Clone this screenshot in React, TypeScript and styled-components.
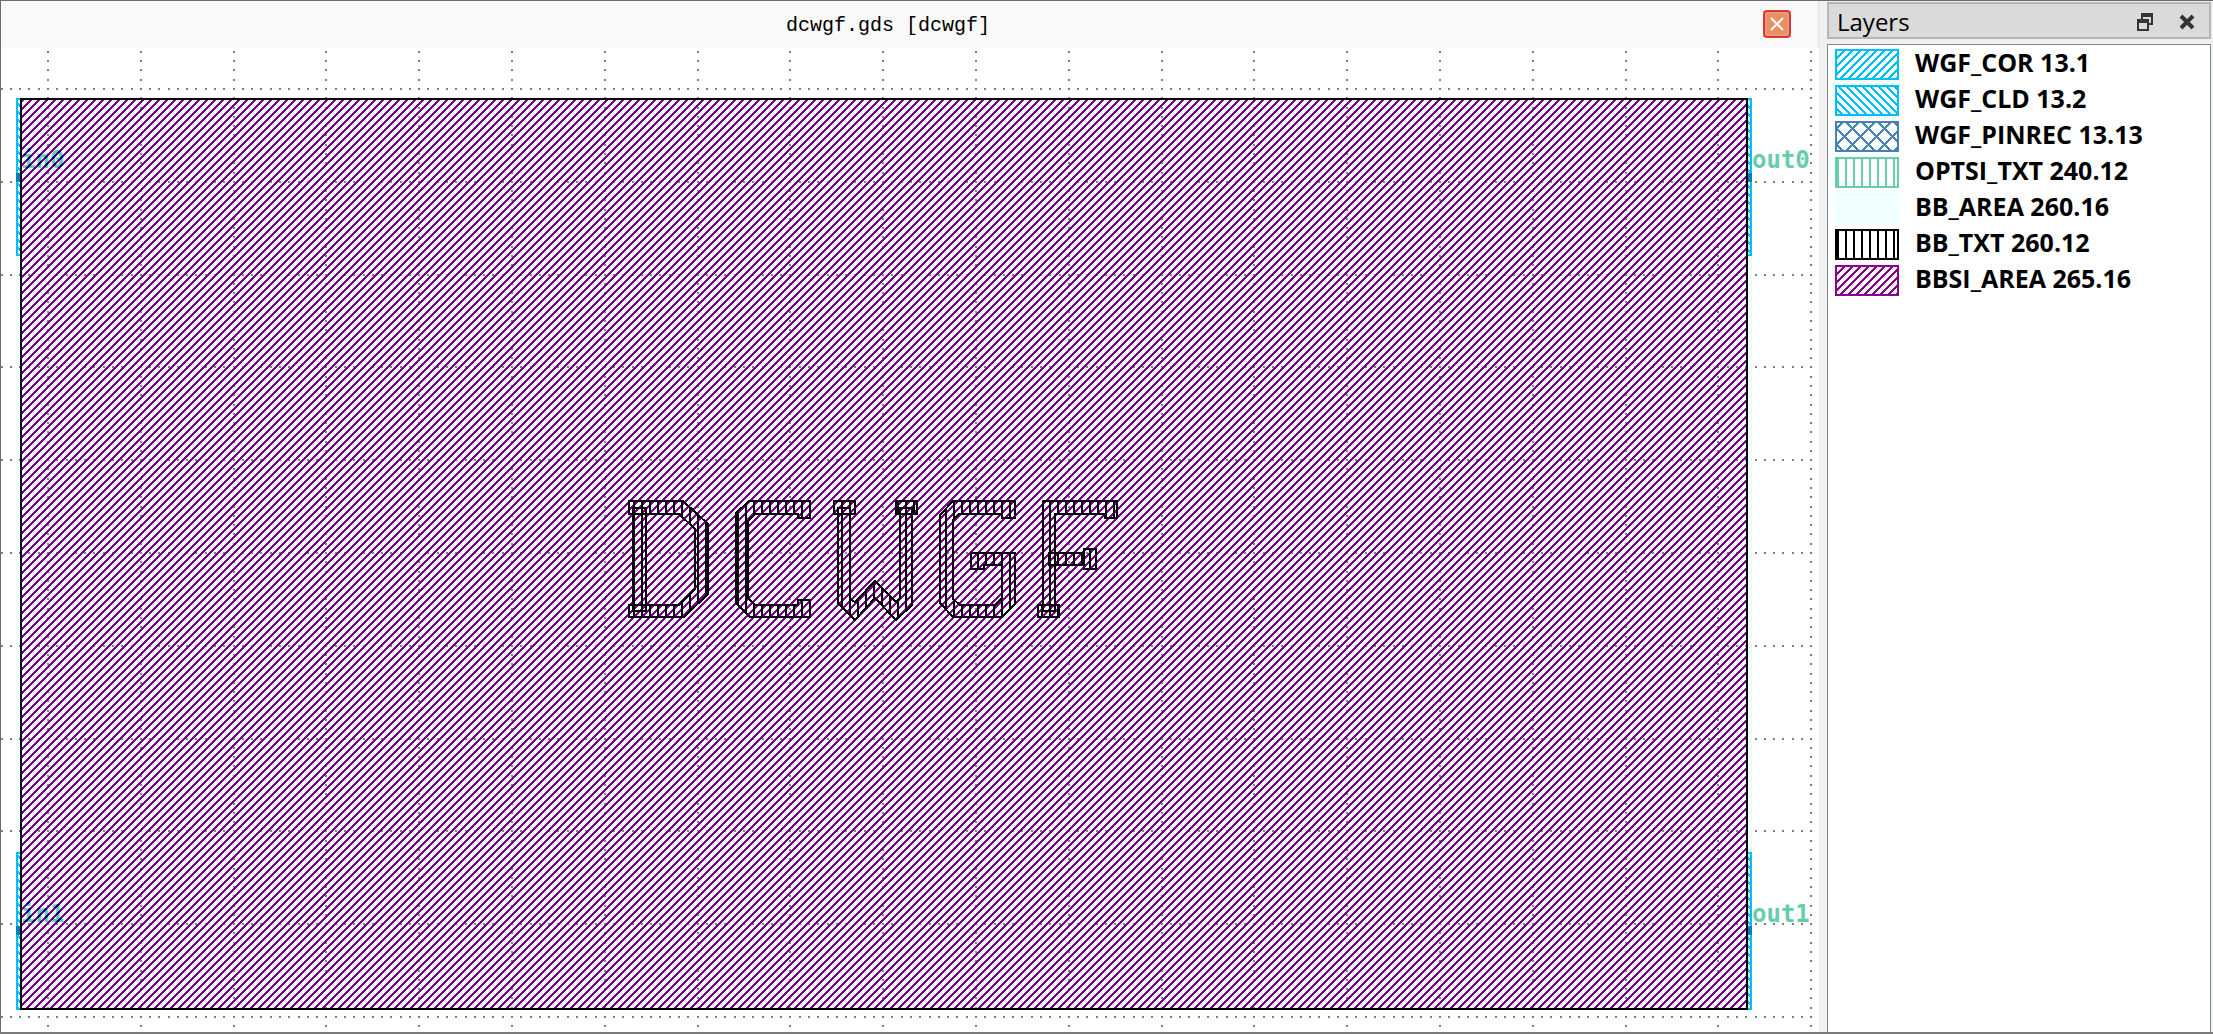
import React from "react";
import styled, { createGlobalStyle } from "styled-components";

const GlobalStyle = createGlobalStyle`
  *, *::before, *::after { box-sizing: border-box; }
  body { margin: 0; background: #f0f0f0; }
`;

const Window = styled.div`
  display: flex;
  height: 100vh;
  border-bottom: 2px solid #7b7b7b;
  background: #f0f0f0;
  color: #000;
  font-family: "Open Sans", "Noto Sans", sans-serif;
`;

const Viewer = styled.main`
  flex: 1;
  min-width: 0;
  display: flex;
  flex-direction: column;
  border-top: 1px solid #6d6a6d;
  border-left: 1px solid #6d6a6d;
  background: #fff;
`;

const TabBar = styled.header`
  display: flex;
  align-items: center;
  flex: none;
  height: 47px;
  padding: 0 27px 1px 12px;
  border-right: 1px solid #e4e4e4;
  background: #f9f9f9;
`;

const TabTitle = styled.h1`
  flex: 1;
  margin: 0;
  padding-top: 4px;
  text-align: center;
  font: 400 20px/24px "Liberation Mono", monospace;
`;

const CloseTab = styled.button`
  display: grid;
  place-items: center;
  width: 28px;
  height: 28px;
  padding: 0;
  border: 2px solid #d93a2b;
  border-radius: 4px;
  background: #e9905f;
  box-shadow: inset 0 0 0 2px #ec9488;
`;

const Canvas = styled.svg`
  display: block;
  flex: 1;
  min-height: 0;
  width: 100%;
`;

const PinLabel = styled.text`
  font: 700 24px "DejaVu Sans Mono", monospace;
`;

const Dock = styled.aside`
  flex: none;
  width: 394px;
  display: flex;
  flex-direction: column;
  gap: 5px;
  padding: 1px 2px 0 8px;
  border-top: 1px solid #6d6a6d;
`;

const DockTitle = styled.div`
  display: flex;
  align-items: center;
  gap: 26px;
  height: 37px;
  padding: 2px 14px 0 8px;
  border: 2px solid #b6b6b6;
  background: #dadada;
`;

const DockName = styled.h2`
  flex: 1;
  margin: 0;
  font-size: 24px;
  line-height: 32px;
  font-weight: 400;
`;

const DockButton = styled.button`
  display: flex;
  padding: 0;
  border: 0;
  background: none;
`;

const LayerList = styled.ul`
  flex: 1;
  margin: 0;
  padding: 2px 7px;
  border: 1px solid #828790;
  border-bottom: 0;
  background: #fff;
  list-style: none;
`;

const LayerRow = styled.li`
  display: flex;
  align-items: flex-start;
  gap: 16px;
  height: 36px;
  font-size: 25px;
  line-height: 30px;
  font-weight: 700;
  white-space: nowrap;
`;

const Swatch = styled.svg`
  flex: none;
  width: 64px;
  height: 31px;
  margin-top: 2px;
`;

type Fill = "rise" | "fall" | "cross" | "bars" | "solid";

interface Layer {
  id: string;
  name: string;
  color: string;
  fill: Fill;
}

const layers: Layer[] = [
  { id: "cor", name: "WGF_COR 13.1", color: "#00bfff", fill: "rise" },
  { id: "cld", name: "WGF_CLD 13.2", color: "#00bfff", fill: "fall" },
  { id: "pinrec", name: "WGF_PINREC 13.13", color: "#4682b4", fill: "cross" },
  { id: "optsi", name: "OPTSI_TXT 240.12", color: "#66cdaa", fill: "bars" },
  { id: "bb", name: "BB_AREA 260.16", color: "#f0ffff", fill: "solid" },
  { id: "bbtxt", name: "BB_TXT 260.12", color: "#000000", fill: "bars" },
  { id: "bbsi", name: "BBSI_AREA 265.16", color: "#8b008b", fill: "rise" },
];

const range = (n: number) => Array.from({ length: n }, (_, i) => i);

/* Stippled diagonal: a run of pixels on each row, wrapped at the tile edge. */
const diagonal = (size: number, run: number, phase: number, rising: boolean) =>
  range(size)
    .flatMap((y) =>
      range(run).map((k) => {
        const x = (((rising ? phase - y : phase + y) + k) % size + size) % size;
        return `M${x} ${y}h1v1h-1z`;
      })
    )
    .join("");

const stipple: Record<Fill, { size: number; d: string }> = {
  rise: { size: 8, d: diagonal(8, 3, 1, true) },
  fall: { size: 8, d: diagonal(8, 3, 1, false) },
  cross: { size: 16, d: diagonal(16, 3, 7, true) + diagonal(16, 3, 9, false) },
  bars: { size: 8, d: "M2 0h2v8h-2z" },
  solid: { size: 8, d: "M0 0h8v8h-8z" },
};

function Stipple(props: {
  id: string;
  fill: Fill;
  color: string;
  back?: string;
  x?: number;
  y?: number;
}) {
  const { size, d } = stipple[props.fill];
  return (
    <pattern
      id={props.id}
      x={props.x ?? 0}
      y={props.y ?? 0}
      width={size}
      height={size}
      patternUnits="userSpaceOnUse"
    >
      {props.back && <rect width={size} height={size} fill={props.back} />}
      <path d={d} fill={props.color} shapeRendering="crispEdges" />
    </pattern>
  );
}

/* The grid has ten dots to a cell. */
const STEP = 9.28;
const gridPath = (() => {
  const dots: string[] = [];
  const dot = (x: number, y: number) =>
    dots.push(`M${Math.round(x) - 1} ${Math.round(y) - 1}h2v2h-2z`);
  for (let line = 0; line < 20; line++)
    for (let k = -4; k < 102; k++) dot(48 + line * STEP * 10, 89 + k * STEP);
  for (let line = 0; line < 11; line++)
    for (let k = -5; k < 191; k++) dot(48 + k * STEP, 89 + line * STEP * 10);
  return dots.join("");
})();

const box = (x1: number, y1: number, x2: number, y2: number) =>
  `M${x1} ${y1}H${x2}V${y2}H${x1}z`;

const glyphShapes = [
  "M629 501H683L708 524V594L684 617H629V605H679L695 589V529L679 514H629z",
  box(633, 508, 646, 611),
  "M749 501H810V518H798V514H755L748 521V598L755 605H798V600H810V617H750L736 603V513z",
  box(834, 501, 855, 514),
  box(896, 501, 917, 514),
  "M838 508H850V599L855 602L875 581L896 602L900 598V508H912V605L896 620L875 598L855 620L838 603z",
  "M953 501H1015V518H1002V514H959L953 520V599L960 605H995L1002 598V565H984V569H971V553H1015V604L1002 617H953L940 603V515z",
  "M1043 501H1117V518H1105V514H1055V611H1043z",
  box(1038, 605, 1059, 617),
  box(1049, 553, 1084, 565),
  box(1084, 549, 1096, 569),
];

function Waveguide({ x, y }: { x: number; y: number }) {
  return (
    <g>
      <rect x={x} y={y} width="6" height="158" fill="#00bfff" />
      <rect x={x + 2} y={y + 2} width="2" height="154" fill="url(#pin)" />
    </g>
  );
}

function LayoutCanvas() {
  return (
    <Canvas
      viewBox="1 48 1818 984"
      preserveAspectRatio="xMidYMid meet"
      role="img"
      aria-label="dcwgf cell layout"
      shapeRendering="crispEdges"
    >
      <defs>
        <Stipple id="area" fill="rise" color="#80008b" />
        <Stipple id="label" fill="rise" color="#00008a" back="#66cdaa" />
        <Stipple id="pin" fill="fall" color="#00bfff" back="#f0ffff" />
        <Stipple id="text" fill="bars" color="#000" x={-1} />
      </defs>
      <rect x="16" y="98" width="1736" height="912" fill="#f0ffff" />
      <path d={gridPath} fill="#808080" />
      <Waveguide x={16} y={98} />
      <Waveguide x={1746} y={98} />
      <Waveguide x={16} y={852} />
      <Waveguide x={1746} y={852} />
      <path d="M1748 100h2v154h-2zM1748 854h2v154h-2z" fill="url(#pin)" />
      <path d="M16 173h4v9h-4zM16 926h4v9h-4zM1748 173h4v9h-4zM1748 926h4v9h-4z" fill="#0080b4" />
      <rect x="22" y="100" width="1724" height="908" fill="url(#area)" />
      <PinLabel x="21" y="168" fill="url(#label)">in0</PinLabel>
      <PinLabel x="21" y="922" fill="url(#label)">in1</PinLabel>
      <PinLabel x="1752" y="168" fill="#66cdaa">out0</PinLabel>
      <PinLabel x="1752" y="922" fill="#66cdaa">out1</PinLabel>
      <rect x="21" y="99" width="1726" height="910" fill="none" stroke="#000" strokeWidth="2" />
      {glyphShapes.map((d) => (
        <path key={d} d={d} fill="url(#text)" stroke="#000" strokeWidth="2" />
      ))}
    </Canvas>
  );
}

function LayerSwatch({ id, color, fill }: Layer) {
  return (
    <Swatch viewBox="0 0 64 31" shapeRendering="crispEdges" aria-hidden="true">
      <defs>
        <Stipple id={`swatch-${id}`} fill={fill} color={color} />
      </defs>
      <rect width="64" height="31" fill={`url(#swatch-${id})`} />
      <rect x="1" y="1" width="62" height="29" fill="none" stroke={color} strokeWidth="2" />
    </Swatch>
  );
}

export default function App() {
  return (
    <>
      <GlobalStyle />
      <Window>
        <Viewer>
          <TabBar>
            <TabTitle>dcwgf.gds [dcwgf]</TabTitle>
            <CloseTab aria-label="Close view">
              <svg width="14" height="14" viewBox="0 0 14 14">
                <path d="M1 1L13 13M13 1L1 13" stroke="#fff" strokeWidth="2" />
              </svg>
            </CloseTab>
          </TabBar>
          <LayoutCanvas />
        </Viewer>
        <Dock>
          <DockTitle>
            <DockName>Layers</DockName>
            <DockButton aria-label="Float panel">
              <svg width="16" height="18" viewBox="0 0 16 18" fill="#333537" fillRule="evenodd">
                <path d="M4 0H16V12H12V10H14V4H6V6H4z" />
                <path d="M0 6H12V18H0zM2 10V16H10V10z" />
              </svg>
            </DockButton>
            <DockButton aria-label="Close panel">
              <svg width="16" height="16" viewBox="0 0 16 16">
                <path d="M2 2L14 14M14 2L2 14" stroke="#333537" strokeWidth="4" />
              </svg>
            </DockButton>
          </DockTitle>
          <LayerList>
            {layers.map((layer) => (
              <LayerRow key={layer.id}>
                <LayerSwatch {...layer} />
                <span>{layer.name}</span>
              </LayerRow>
            ))}
          </LayerList>
        </Dock>
      </Window>
    </>
  );
}
